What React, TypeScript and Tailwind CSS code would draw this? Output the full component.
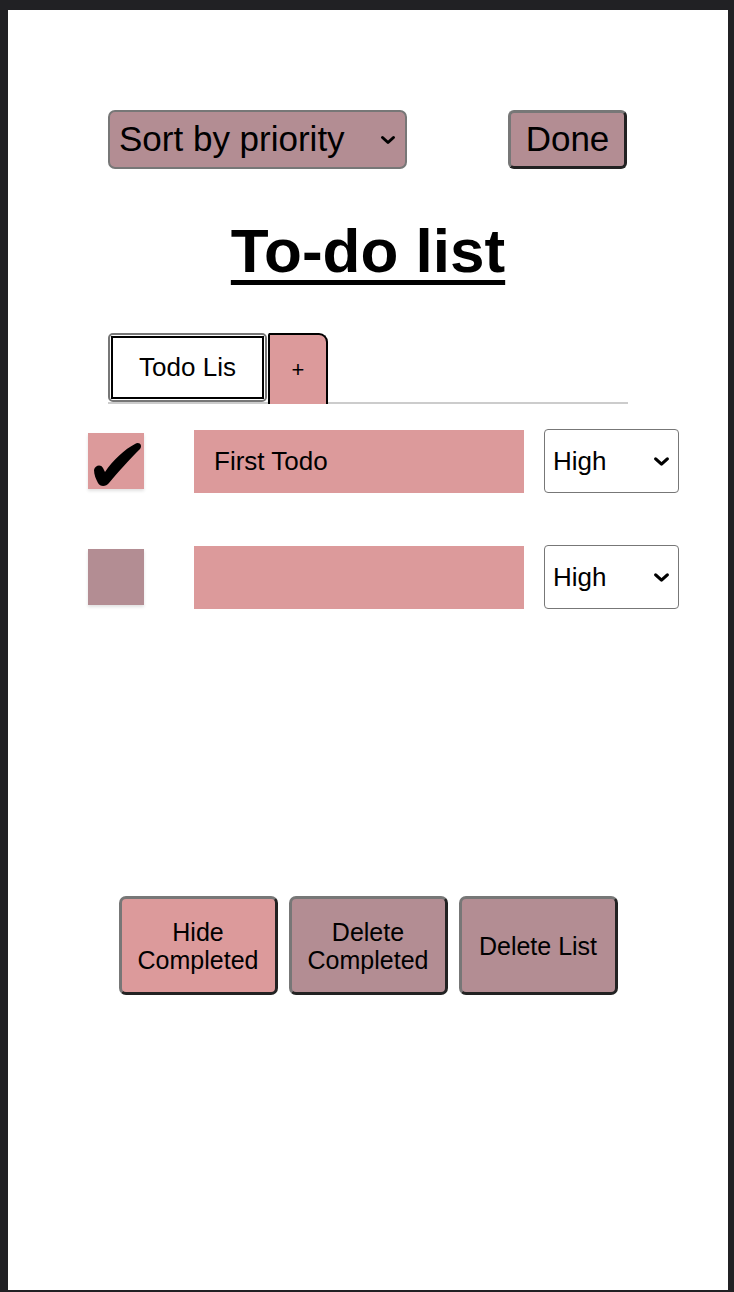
import { FC } from "react";

const Chevron: FC<{ className?: string }> = ({ className }) => (
  <svg viewBox="0 0 16 10" className={className} fill="none">
    <path
      d="M2.5 2.5 L8 7.5 L13.5 2.5"
      stroke="black"
      strokeWidth="3"
      strokeLinecap="round"
      strokeLinejoin="round"
    />
  </svg>
);

const BrushCheck: FC = () => (
  <svg viewBox="0 0 56 56" className="w-[56px] h-[56px]">
    <path
      d="M6 37 C7 32 13 31 15 35 L17 39 C25 27 37 16 47 11 C51 8 55 12 52 16 C43 25 30 39 21 50 C18 54 12 54 10 50 C8 46 6 42 6 37 Z"
      fill="black"
    />
  </svg>
);

type Todo = { id: number; text: string; done: boolean };

const todos: Todo[] = [
  { id: 1, text: "First Todo", done: true },
  { id: 2, text: "", done: false },
];

const TodoRow: FC<{ todo: Todo }> = ({ todo }) => (
  <div className="flex items-center h-[64px]">
    <div
      className={`w-[56px] h-[56px] shadow-[0_2px_3px_rgba(0,0,0,0.12)] ${
        todo.done ? "bg-[#dc9a9b]" : "bg-[#b38d93]"
      }`}
    >
      {todo.done && <BrushCheck />}
    </div>
    <div className="ml-[50px] w-[330px] h-[63px] bg-[#dc9a9b] flex items-center px-[20px] text-[26px]">
      {todo.text}
    </div>
    <div className="ml-[20px] w-[135px] h-[64px] bg-white border-[1.5px] border-[#777] rounded-[4px] flex items-center justify-between pl-[8px] pr-[8px] text-[26px]">
      <span>High</span>
      <Chevron className="w-[17px] h-[11px]" />
    </div>
  </div>
);

const App: FC = () => {
  return (
    <div
      className="min-h-screen bg-[#212124] pt-[10px] pl-[8px] pr-[6px] pb-[2px] text-black"
      style={{ fontFamily: '"Liberation Sans", Arial, sans-serif' }}
    >
      <div className="bg-white h-[1280px] flex flex-col items-center pt-[100px]">
        <div className="w-[520px] flex justify-between">
          <div className="w-[299px] h-[59px] bg-[#b38d93] border-2 border-[#777] rounded-[7px] flex items-center justify-between pl-[9px] pr-[9px] text-[35px]">
            <span>Sort by priority</span>
            <Chevron className="w-[16px] h-[10px]" />
          </div>
          <button className="w-[119px] h-[59px] mr-[1px] bg-[#b38d93] border-[3px] border-t-[#777] border-l-[#777] border-b-[#222] border-r-[#222] rounded-[6px] text-[35px] flex items-center justify-center">
            Done
          </button>
        </div>

        <h1 className="mt-[51px] text-[62px] leading-[62px] font-bold underline decoration-[5px] underline-offset-[8px]">
          To-do list
        </h1>

        <div className="mt-[51px] w-[520px] h-[71px] flex items-end border-b-2 border-[#cccccc]">
          <div className="w-[159px] h-[69px] border-2 border-[#777] rounded-[5px] p-[1px]">
            <div className="h-full border-2 border-black flex items-center justify-center text-[26px]">
              Todo Lis
            </div>
          </div>
          <div className="w-[60px] h-[71px] -mb-[2px] ml-px bg-[#dc9a9b] border-2 border-b-0 border-black rounded-tl-[2px] rounded-tr-[9px] flex items-center justify-center text-[22px]">
            +
          </div>
        </div>

        <div className="self-start ml-[80px] mt-[25px] flex flex-col gap-[52px]">
          {todos.map((todo) => (
            <TodoRow key={todo.id} todo={todo} />
          ))}
        </div>

        <div className="mt-[287px] flex gap-[11px]">
          <button className="w-[159px] h-[99px] bg-[#dc9a9b] border-[3px] border-t-[#777] border-l-[#777] border-b-[#222] border-r-[#222] rounded-[7px] text-[25px] leading-[28px]">
            Hide
            <br />
            Completed
          </button>
          <button className="w-[159px] h-[99px] bg-[#b38d93] border-[3px] border-t-[#777] border-l-[#777] border-b-[#222] border-r-[#222] rounded-[7px] text-[25px] leading-[28px]">
            Delete
            <br />
            Completed
          </button>
          <button className="w-[159px] h-[99px] bg-[#b38d93] border-[3px] border-t-[#777] border-l-[#777] border-b-[#222] border-r-[#222] rounded-[7px] text-[25px] leading-[28px]">
            Delete List
          </button>
        </div>
      </div>
    </div>
  );
};

export default App;
